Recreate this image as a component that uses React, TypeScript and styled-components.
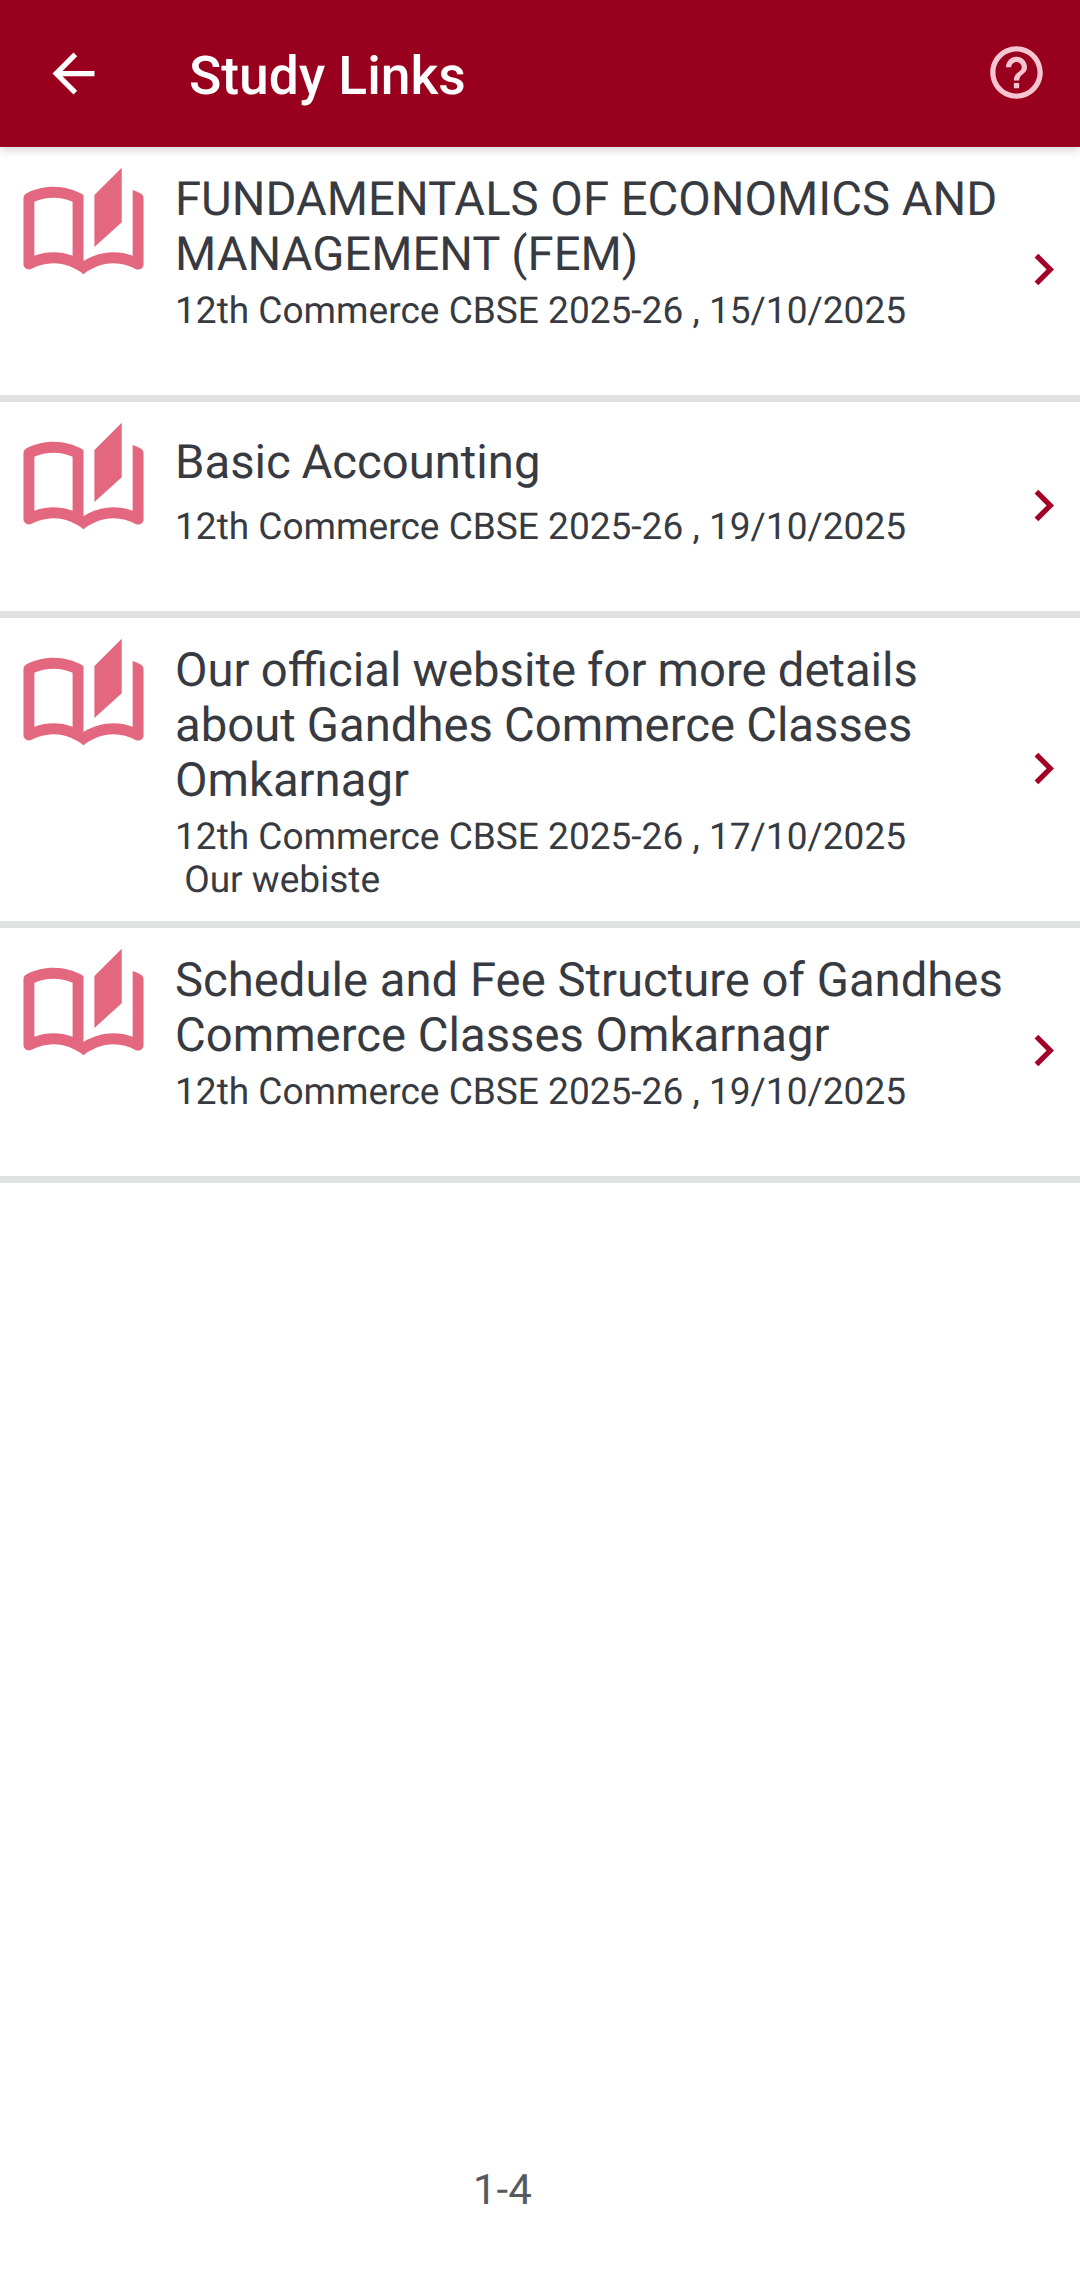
import React from "react";
import styled, { createGlobalStyle } from "styled-components";

const GlobalStyle = createGlobalStyle`
  *, *::before, *::after { box-sizing: border-box; }
  body {
    margin: 0;
    background: #fff;
    font-family: Roboto, "Noto Sans", sans-serif;
    text-rendering: geometricPrecision;
  }
`;

const Screen = styled.div`
  display: flex;
  flex-direction: column;
  width: 1080px;
  height: 2271px;
  background: #fff;
  overflow: hidden;
`;

const AppBar = styled.header`
  display: flex;
  align-items: center;
  flex: none;
  height: 147px;
  padding: 0 32px 0 42px;
  background: #99001d;
  box-shadow: 0 2px 10px rgba(0, 0, 0, 0.2);
  z-index: 1;
`;

const IconButton = styled.button<{ $color: string; $lift?: number }>`
  display: flex;
  flex: none;
  padding: 0 0 ${(p) => p.$lift ?? 0}px;
  border: 0;
  background: none;
  color: ${(p) => p.$color};
`;

const Glyph = styled.svg<{ $size: number }>`
  display: block;
  flex: none;
  width: ${(p) => p.$size}px;
  height: ${(p) => p.$size}px;
  fill: currentColor;
`;

const ScreenTitle = styled.h1`
  flex: 1;
  margin: 0;
  padding: 6px 0 0 84px;
  color: #fff;
  font-size: 53.4px;
  font-weight: 500;
  line-height: 62px;
`;

const List = styled.ul`
  flex: none;
  margin: 0;
  padding: 0;
  list-style: none;
`;

const Row = styled.li<{ $height: number }>`
  display: flex;
  height: ${(p) => p.$height}px;
  padding: 0 5px 0 18px;
  border-bottom: 7px solid #dfe1e3;
`;

const BookSlot = styled.div`
  flex: none;
  width: 157px;
  padding-top: 18px;
  color: #e3677f;
`;

const Details = styled.div<{ $roomy?: boolean }>`
  flex: 1;
  padding-top: ${(p) => (p.$roomy ? 33 : 25)}px;
  color: #373b41;
  white-space: pre;
`;

const LinkTitle = styled.h2<{ $roomy?: boolean; $wordSpacing?: number }>`
  margin: 0 0 ${(p) => (p.$roomy ? 16 : 8)}px;
  font-size: 47.25px;
  font-weight: 400;
  line-height: 55px;
  word-spacing: ${(p) => p.$wordSpacing ?? 0}px;
`;

const Meta = styled.p`
  margin: 0;
  font-size: 37.05px;
  line-height: 43px;
`;

const ChevronSlot = styled.div`
  display: flex;
  align-items: center;
  flex: none;
  padding-bottom: 3px;
  color: #a50026;
`;

const Footer = styled.footer`
  display: flex;
  margin-top: auto;
  padding: 0 0 55px 473px;
  color: #555a60;
  font-size: 42px;
  line-height: 50px;
`;

const links = [
  {
    lines: ["FUNDAMENTALS OF ECONOMICS AND", "MANAGEMENT (FEM)"],
    meta: ["12th Commerce CBSE 2025-26 , 15/10/2025"],
    height: 255,
  },
  {
    lines: ["Basic Accounting"],
    meta: ["12th Commerce CBSE 2025-26 , 19/10/2025"],
    height: 216,
    roomy: true,
    wordSpacing: -1,
  },
  {
    lines: ["Our official website for more details", "about Gandhes Commerce Classes", "Omkarnagr"],
    meta: ["12th Commerce CBSE 2025-26 , 17/10/2025", " Our webiste"],
    height: 310,
    wordSpacing: -0.6,
  },
  {
    lines: ["Schedule and Fee Structure of Gandhes", "Commerce Classes Omkarnagr"],
    meta: ["12th Commerce CBSE 2025-26 , 19/10/2025"],
    height: 255,
  },
];

const Icon = ({ d, size = 63 }: { d: string; size?: number }) => (
  <Glyph $size={size} viewBox="0 0 24 24" aria-hidden="true">
    <path d={d} />
  </Glyph>
);

const BACK = "M20 11H7.83l5.59-5.59L12 4l-8 8 8 8 1.41-1.41L7.83 13H20v-2z";
const HELP =
  "M11 18h2v-2h-2v2zm1-16C6.48 2 2 6.48 2 12s4.48 10 10 10 10-4.48 10-10S17.52 2 12 2zm0 18c-4.41 0-8-3.59-8-8s3.59-8 8-8 8 3.59 8 8-3.59 8-8 8zm0-14c-2.21 0-4 1.79-4 4h2c0-1.1.9-2 2-2s2 .9 2 2c0 2-3 1.75-3 5h2c0-2.25 3-2.5 3-5 0-2.21-1.79-4-4-4z";
const CHEVRON = "M8.59 16.59 13.17 12 8.59 7.41 10 6l6 6-6 6z";
const BOOK =
  "M22.47 5.2c-.47-.24-.96-.44-1.47-.61v12.03c-1.14-.41-2.31-.62-3.5-.62-1.9 0-3.78.54-5.5 1.58V5.48C10.38 4.55 8.51 4 6.5 4c-1.79 0-3.48.44-4.97 1.2-.33.16-.53.51-.53.88v12.08c0 .58.47.99 1 .99.16 0 .32-.04.48-.12C3.69 18.4 5.05 18 6.5 18c2.07 0 3.98.82 5.5 2 1.52-1.18 3.43-2 5.5-2 1.45 0 2.81.4 4.02 1.04.16.08.32.12.48.12.52 0 1-.41 1-.99V6.08c0-.37-.2-.72-.53-.88zM10 16.62C8.86 16.21 7.69 16 6.5 16s-2.36.21-3.5.62V6.71C4.11 6.24 5.28 6 6.5 6c1.2 0 2.39.25 3.5.72v9.9zM19 .5l-5 5V15l5-4.5V.5z";

export default function App() {
  return (
    <Screen>
      <GlobalStyle />
      <AppBar>
        <IconButton $color="#fff" aria-label="Back">
          <Icon d={BACK} />
        </IconButton>
        <ScreenTitle>Study Links</ScreenTitle>
        <IconButton $color="#f5c6d1" $lift={2} aria-label="Help">
          <Icon d={HELP} />
        </IconButton>
      </AppBar>
      <List>
        {links.map((link) => (
          <Row key={link.lines[0]} $height={link.height}>
            <BookSlot>
              <Icon d={BOOK} size={131} />
            </BookSlot>
            <Details $roomy={link.roomy}>
              <LinkTitle $roomy={link.roomy} $wordSpacing={link.wordSpacing}>
                {link.lines.join("\n")}
              </LinkTitle>
              {link.meta.map((text) => (
                <Meta key={text}>{text}</Meta>
              ))}
            </Details>
            <ChevronSlot>
              <Icon d={CHEVRON} />
            </ChevronSlot>
          </Row>
        ))}
      </List>
      <Footer>1-4</Footer>
    </Screen>
  );
}
